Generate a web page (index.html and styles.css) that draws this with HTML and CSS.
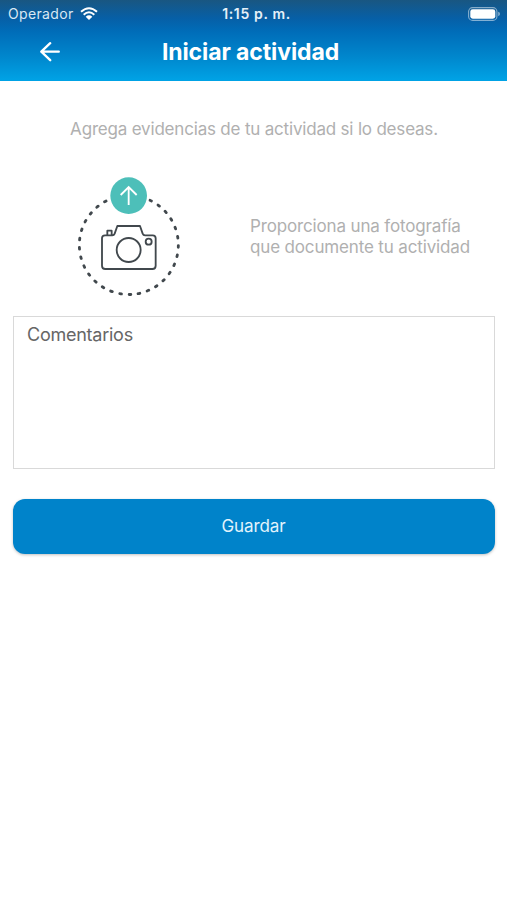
FILE: index.html
```html
<!DOCTYPE html>
<html lang="es">
<head>
<meta charset="utf-8">
<title>Iniciar actividad</title>
<link rel="stylesheet" href="styles.css">
</head>
<body>
<header class="header">
  <div class="status">
    <div class="carrier"><span class="carrier-name">Operador</span>
      <svg class="wifi" viewBox="0 0 54 42" fill="none" stroke="#fff" stroke-width="6"><path d="M3 14Q27-7 51 14M11 23Q27 9 43 23"/><path d="M17 29Q27 21 37 29L27 39Z" fill="#fff" stroke="none"/></svg>
    </div>
    <span class="time">1:15 p. m.</span>
    <svg class="battery" viewBox="0 0 32 14"><rect x=".6" y=".6" width="28.3" height="12.8" rx="4" fill="none" stroke="#fff" stroke-opacity=".5" stroke-width="1.1"/><rect x="2.3" y="2.3" width="25" height="9.4" rx="2.4" fill="#fff"/><path d="M30.2 4.8Q32 5.4 32 7T30.2 9.2Z" fill="#fff" fill-opacity=".5"/></svg>
  </div>
  <div class="bar">
    <svg class="back" viewBox="0 0 20 20" fill="none" stroke="#fff" stroke-width="2.3" stroke-linecap="round" stroke-linejoin="round"><path d="M18.800 9.700H1.500M10.200 1.200L1.300 9.700L10.200 18.200"/></svg>
    <h1 class="title">Iniciar actividad</h1>
  </div>
</header>
<main class="content">
  <p class="intro">Agrega evidencias de tu actividad si lo deseas.</p>
  <section class="evidence">
    <svg class="photo" viewBox="0 0 360 405" fill="none" stroke="#41484d" stroke-width="5.5" stroke-linejoin="round" stroke-linecap="round">
      <circle cx="176.500" cy="225" r="148.500" pathLength="330" stroke-width="8.500" stroke-dasharray="1.800 8.200" transform="rotate(87.700 176.500 225)"/>
      <circle cx="176" cy="77" r="61" fill="#fff" stroke="none"/>
      <circle cx="176" cy="77" r="55" fill="#4dbfb9" stroke="none"/>
      <path d="M176 105V52M152 75L176 51L200 75" stroke="#fff" stroke-linecap="butt" stroke-linejoin="miter"/>
      <path d="M105 196H127Q132 196 134 191L142 168H210L218 191Q220 196 225 196H248Q257 196 257 205V287Q257 297 247 297H106Q96 297 96 287V205Q96 196 105 196ZM112 195V182H125V195"/>
      <circle cx="176" cy="240" r="36"/>
      <circle cx="236" cy="215" r="9"/>
    </svg>
    <p class="hint">Proporciona una fotografía<br>que documente tu actividad</p>
  </section>
  <textarea class="comments" placeholder="Comentarios"></textarea>
  <button class="save" type="button">Guardar</button>
</main>
</body>
</html>
```
FILE: styles.css
```css
* { box-sizing: border-box; }
body { margin: 0; min-height: 900px; background: #fff; font-family: Inter, sans-serif; }
.header { height: 81px; color: #fff; background: linear-gradient(#195681 0, #075fa6 18px, #006db9 32px, #0087cd 57px, #00a2e5 80px); }
.status { height: 27px; padding: 0 7px 0 8px; display: grid; grid-template-columns: 1fr auto 1fr; align-items: center; font-size: 14px; }
.carrier { display: flex; align-items: center; gap: 6px; color: #d9e8f3; letter-spacing: .35px; }
.wifi { width: 18px; height: 14px; }
.time { font-weight: 600; letter-spacing: .65px; color: #e5f0f8; padding-left: 5px; }
.battery { width: 32px; height: 14px; justify-self: end; }
.bar { height: 50px; display: grid; grid-template-columns: 60px 1fr 66px; align-items: center; }
.back { width: 20px; height: 20px; margin-left: 40px; }
.title { margin: 0; text-align: center; font-size: 23px; line-height: 50px; font-weight: 700; letter-spacing: -.1px; white-space: nowrap; }
.content { display: flex; flex-direction: column; padding: 0 12px 0 13px; }
.intro { margin: 37px 0 0; height: 22px; line-height: 22px; text-align: center; font-size: 17px; letter-spacing: -.19px; color: #b0b0b0; white-space: nowrap; }
.evidence { margin-top: 30px; padding-left: 57px; height: 135px; display: flex; }
.photo { width: 120px; height: 135px; }
.hint { margin: 46px 0 0 60px; font-size: 17px; line-height: 21px; letter-spacing: -.15px; color: #b0b0b0; white-space: nowrap; }
.comments { display: block; width: 100%; height: 153px; margin: 11px 0 0; padding: 7px 13px; resize: none; border: 1px solid #d9d9d9; border-radius: 0; outline: 0; background: #fff; font: 18px/22px Inter, sans-serif; letter-spacing: -.25px; color: #666; }
.comments::placeholder { color: #666; opacity: 1; }
.save { height: 55px; margin-top: 30px; padding: 0 1px 0 0; border: 0; border-radius: 12px; background: #0083ca; color: #e2f3fc; font: 17px/55px Inter, sans-serif; letter-spacing: -.1px; box-shadow: 0 1px 3px rgba(0,0,0,.25); }
```
